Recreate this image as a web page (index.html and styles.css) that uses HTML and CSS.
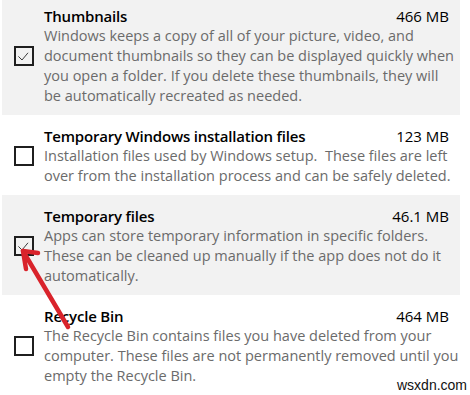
FILE: index.html
```html
<!DOCTYPE html>
<html>
<head>
<meta charset="utf-8">
<link rel="stylesheet" href="styles.css">
</head>
<body>
<div class="page">
  <div class="list">
    <div class="item shaded">
      <span class="check"><svg class="tick" viewBox="0 0 20 20" width="16" height="16"><path d="M3 10.5 L7.5 15 L15 6" fill="none" stroke="#333" stroke-width="1.2"/></svg></span>
      <div class="content">
        <div class="head"><span class="title">Thumbnails</span><span class="size">466 MB</span></div>
        <p class="desc">Windows keeps a copy of all of your picture, video, and<br>document thumbnails so they can be displayed quickly when<br>you open a folder. If you delete these thumbnails, they will<br>be automatically recreated as needed.</p>
      </div>
    </div>
    <div class="item">
      <span class="check"></span>
      <div class="content">
        <div class="head"><span class="title">Temporary Windows installation files</span><span class="size">123 MB</span></div>
        <p class="desc">Installation files used by Windows setup.&nbsp; These files are left<br>over from the installation process and can be safely deleted.</p>
      </div>
    </div>
    <div class="item shaded">
      <span class="check"><svg class="tick" viewBox="0 0 20 20" width="16" height="16"><path d="M3 10.5 L7.5 15 L15 6" fill="none" stroke="#333" stroke-width="1.2"/></svg></span>
      <div class="content">
        <div class="head"><span class="title">Temporary files</span><span class="size">46.1 MB</span></div>
        <p class="desc">Apps can store temporary information in specific folders.<br>These can be cleaned up manually if the app does not do it<br>automatically.</p>
      </div>
    </div>
    <div class="item">
      <span class="check"></span>
      <div class="content">
        <div class="head"><span class="title">Recycle Bin</span><span class="size">464 MB</span></div>
        <p class="desc">The Recycle Bin contains files you have deleted from your<br>computer. These files are not permanently removed until you<br>empty the Recycle Bin.</p>
      </div>
    </div>
  </div>
  <svg class="arrow" width="90" height="100" viewBox="0 0 90 100">
    <g fill="none" stroke="#d9232b" stroke-width="4.5" stroke-linecap="round" stroke-linejoin="round">
      <path d="M63 82 L18 6"/>
      <path d="M33 8 L18 6 L21 24"/>
    </g>
  </svg>
  <span class="mark">wsxdn.com</span>
</div>
</body>
</html>
```

FILE: styles.css
```css
html, body {
  margin: 0;
  padding: 0;
  background: #ffffff;
}
.page {
  position: relative;
  width: 470px;
  height: 395px;
  overflow: hidden;
  font-family: "Open Sans", "Noto Sans", sans-serif;
}
.list {
  margin-top: -5px;
  display: flex;
  flex-direction: column;
}
.item {
  display: flex;
  align-items: center;
  width: 458px;
  box-sizing: border-box;
  margin-left: 2px;
  padding: 11px 11px 9px 12px;
}
.item.shaded {
  background: #f2f2f2;
}
.check {
  flex: none;
  width: 20px;
  height: 20px;
  box-sizing: border-box;
  border: 2px solid #1f1f1f;
  margin-right: 10px;
  display: flex;
  align-items: center;
  justify-content: center;
}
.content {
  flex: 1;
  min-width: 0;
}
.head {
  display: flex;
  justify-content: space-between;
  line-height: 20px;
  font-size: 15px;
  color: #000;
}
.title {
  font-weight: 600;
  letter-spacing: -0.2px;
}
.size {
  font-weight: 400;
}
.desc {
  margin: 0;
  font-size: 14.5px;
  line-height: 20px;
  color: #6b6b6b;
  white-space: nowrap;
}
.arrow {
  position: absolute;
  left: 5px;
  top: 245px;
}
.mark {
  position: absolute;
  left: 397px;
  top: 377px;
  font-family: "Liberation Sans", Arial, sans-serif;
  font-size: 14px;
  color: #111;
}
```
